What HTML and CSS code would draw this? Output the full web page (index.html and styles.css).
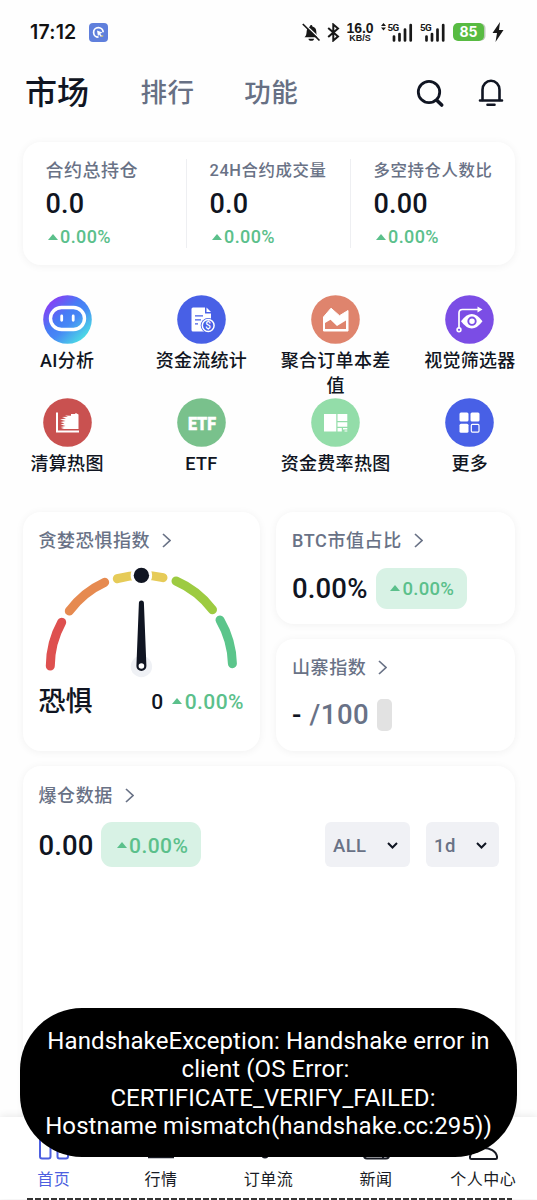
FILE: index.html
```html
<!DOCTYPE html>
<html lang="zh-CN">
<head>
<meta charset="utf-8">
<title>市场</title>
<link rel="stylesheet" href="styles.css">
</head>
<body>
<div class="app">
  <div class="status">
    <span class="clock">17:12</span>
    <svg class="app-badge" width="19" height="19" viewBox="0 0 19 19"><rect width="19" height="19" rx="4" fill="#5f7fdc"/><path d="M9.500 14.200A4.800 4.800 0 1 1 14.200 9.200" fill="none" stroke="#fff" stroke-width="1.700"/><path d="M8 7.500l5.500 2-2.300 1.200 1.800 2.300-1 .9-2-2.300-1 2z" fill="#fff"/><path d="M11.500 13.800l2.700-2v2z" fill="#d8c46a"/></svg>
    <div class="status-right">
      <svg width="19" height="19" viewBox="0 0 19 19"><path d="M2.500 14.300c2-2 1.900-3.300 2.200-6.300.3-2.800 1.700-4 3.300-4.500 0-2 2.400-2 2.400 0C13 4.300 14.300 6 14.300 8.500c0 3 .6 4 2 5.800z" fill="#181818"/><path d="M6.500 15.700h5.500a2.700 2 0 0 1-5.500 0z" fill="#181818"/><path d="M2.500 1l15.500 14.700" stroke="#fff" stroke-width="1.500"/><path d="M.8 1l16.700 16.500" stroke="#181818" stroke-width="1.700"/></svg>
      <svg class="bt" width="13" height="19" viewBox="0 0 13 19"><path d="M1.200 5l9.800 8.500-4.700 4V1.500l4.700 4L1.200 14" fill="none" stroke="#181818" stroke-width="2"/></svg>
      <div class="speed"><b>16.0</b><span>KB/S</span></div>
      <svg class="sig1" width="32" height="20" viewBox="0 0 32 20"><path d="M0 4l2.500-3L5 4zM0 5.500h5l-2.500 3z" fill="#181818"/><path d="M13 14.500v4M18.500 12v6.500M24 7.500v11M29.700 3v15.500" stroke="#181818" stroke-width="2.700" stroke-linecap="round"/><text x="6.500" y="8.700" class="g5">5G</text></svg>
      <svg class="sig2" width="26" height="20" viewBox="0 0 26 20"><path d="M6.500 14.500v4M12 12v6.500M17.500 7.500v11M23.200 3v15.500" stroke="#181818" stroke-width="2.700" stroke-linecap="round"/><text x="0" y="8.700" class="g5">5G</text></svg>
      <span class="battery">85</span>
      <svg class="bolt" width="12" height="20" viewBox="0 0 12 20"><path d="M8 0L.5 11H5L3.500 20 11.500 8H7z" fill="#181818"/></svg>
    </div>
  </div>

  <header class="tabs">
    <span class="tab active">市场</span><span class="tab">排行</span><span class="tab">功能</span>
    <div class="actions">
      <svg width="30" height="30" viewBox="0 0 30 30" fill="none" stroke="#101522" stroke-linecap="round"><circle cx="14" cy="14" r="10.700" stroke-width="2.800"/><path d="M22 22.500l4.700 4.500" stroke-width="3.600"/></svg>
      <svg width="28" height="28" viewBox="0 0 28 28" fill="none" stroke="#101522" stroke-width="2.600" stroke-linecap="round"><path d="M5.500 21V10.800a8.500 9 0 0 1 17 0V21"/><path d="M3 21.500h22M10.500 25.800h7"/></svg>
    </div>
  </header>

  <section class="card stats">
    <div class="stat first"><label>合约总持仓</label><strong>0.0</strong><span class="up"><i></i>0.00%</span></div>
    <div class="stat"><label>24H合约成交量</label><strong>0.0</strong><span class="up"><i></i>0.00%</span></div>
    <div class="stat"><label>多空持仓人数比</label><strong>0.00</strong><span class="up"><i></i>0.00%</span></div>
  </section>

  <section class="tools">
    <div class="tool"><svg viewBox="0 0 49 49"><defs><linearGradient id="ai" x1=".1" y1=".1" x2=".85" y2=".9"><stop offset="0" stop-color="#9038f5"/><stop offset=".4" stop-color="#477bf5"/><stop offset=".6" stop-color="#4788f5"/><stop offset="1" stop-color="#4ce0e4"/></linearGradient></defs><circle cx="24.500" cy="24.500" r="24.300" fill="url(#ai)"/><rect x="7.500" y="12.500" width="34" height="22" rx="11" fill="none" stroke="#fff" stroke-width="3.400"/><path d="M18.700 21v4.300M30.200 21v4.300" stroke="#fff" stroke-width="2.800" stroke-linecap="round"/></svg><span>AI分析</span></div>
    <div class="tool"><svg viewBox="0 0 49 49"><circle cx="24.500" cy="24.500" r="24.300" fill="#4860e6"/><path d="M16 12.500h12v6h6v18H16a1.500 1.500 0 0 1-1.500-1.500V14a1.500 1.500 0 0 1 1.500-1.500z" fill="#fff"/><path d="M29.500 12.500l4.500 4.500h-4.500z" fill="#fff"/><path d="M18 20.800h8M18 24.800h6M18 28.800h3" stroke="#4860e6" stroke-width="1.300"/><circle cx="31.200" cy="30.500" r="7.500" fill="#4860e6"/><circle cx="31.200" cy="30.500" r="5.900" fill="#4860e6" stroke="#fff" stroke-width="1.500"/><text x="31.200" y="34" class="dollar">$</text></svg><span>资金流统计</span></div>
    <div class="tool"><svg viewBox="0 0 49 49"><circle cx="24.500" cy="24.500" r="24.300" fill="#df846d"/><path d="M12.500 22l7.500-8.800 8.500 7.500 8.500-5.200v20.500H12.500z" fill="#fff" stroke="#fff" stroke-width="1" stroke-linejoin="round"/><path d="M14 28l5.500-3.300 6.500 6.300 9-5.500v8.500H14z" fill="#df846d"/></svg><span>聚合订单本差值</span></div>
    <div class="tool"><svg viewBox="0 0 49 49"><circle cx="24.500" cy="24.500" r="24.300" fill="#7b4de5"/><path d="M14 33V18q0-3.500 3.500-3.500H34" fill="none" stroke="#fff" stroke-width="1.700"/><path d="M32.500 11.500l5 3-5 3z" fill="#fff"/><circle cx="14" cy="34.800" r="1.900" fill="none" stroke="#fff" stroke-width="1.600"/><path d="M16 26.200q10.700-14.500 21.500 0-10.700 14.500-21.500 0z" fill="#fff"/><circle cx="27" cy="26.200" r="3.700" fill="none" stroke="#7b4de5" stroke-width="1.900"/></svg><span>视觉筛选器</span></div>
    <div class="tool"><svg viewBox="0 0 49 49"><circle cx="24.500" cy="24.500" r="24.300" fill="#c95150"/><path d="M14 14.500V33.500H36" fill="none" stroke="#fff" stroke-width="2"/><path d="M35.500 16.500v14.500H18l3-1-3.500-1 5-1-5-1.500 4-1-4-1.500 5-1-5.500-1.500 6-1-4-1.500 6-.3-3-1.200 6 .2v-1.700h4l.8-1z" fill="#fff"/></svg><span>清算热图</span></div>
    <div class="tool"><svg viewBox="0 0 49 49"><circle cx="24.500" cy="24.500" r="24.300" fill="#79c18c"/><text x="11" y="31.700" class="etf" textLength="28" lengthAdjust="spacingAndGlyphs">ETF</text></svg><span>ETF</span></div>
    <div class="tool"><svg viewBox="0 0 49 49"><circle cx="24.500" cy="24.500" r="24.300" fill="#93dda9"/><path d="M13 16h12.300v17.500H13zM26.500 16h9.800v7h-9.800zM26.500 24.200h9.800v4.500h-9.800zM26.500 29.900h4.300v3.600h-4.300zM32 29.900h4.300v1.700H32zM33.500 32.500h2.800v1h-2.800z" fill="#fff"/></svg><span>资金费率热图</span></div>
    <div class="tool"><svg viewBox="0 0 49 49"><circle cx="24.500" cy="24.500" r="24.300" fill="#4860e6"/><g fill="#fff"><rect x="14.500" y="14.500" width="9" height="9" rx="1.500"/><rect x="25.500" y="14.500" width="9" height="9" rx="1.500"/><rect x="14.500" y="25.700" width="9" height="9" rx="1.500"/></g><rect x="26.300" y="26.400" width="7.700" height="7.700" rx="1" fill="none" stroke="#fff" stroke-width="1.200"/></svg><span>更多</span></div>
  </section>

  <section class="indices">
    <div class="card fear">
      <h2>贪婪恐惧指数<svg class="chev" viewBox="0 0 9 15"><path d="M1 1l7 6.500L1 14"/></svg></h2>
      <svg class="gauge" width="207" height="122" viewBox="0 0 207 122">
        <g fill="none" stroke-width="9" stroke-linecap="round">
          <path d="M12.300 108A91.500 91.500 0 0 1 23.700 64.300" stroke="#de504f"/>
          <path d="M31.300 53A91.500 91.500 0 0 1 66.700 24.300" stroke="#e68a50"/>
          <path d="M79.300 20.700A91.500 91.500 0 0 1 125 19.700" stroke="#e6cb58"/>
          <path d="M138 23A91.500 91.500 0 0 1 174.500 51.700" stroke="#9dcb41"/>
          <path d="M182 62A91.500 91.500 0 0 1 194.400 105.700" stroke="#5bc58b"/>
        </g>
        <circle cx="103.400" cy="17.400" r="10.700" fill="#fff"/><circle cx="103.400" cy="17.400" r="7.700" fill="#101522"/>
        <circle cx="103.400" cy="108.500" r="10.700" fill="#eff1f5"/>
        <path d="M100.900 45a2.500 2.500 0 0 1 5 0l2.500 63a5 5 0 0 1-10 0z" fill="#101522"/><circle cx="103.400" cy="108" r="2.800" fill="#fff"/>
      </svg>
      <div class="fear-row"><strong>恐惧</strong><b>0</b><span class="up large"><i></i>0.00%</span></div>
    </div>
    <div class="side">
      <div class="card btc">
        <h2>BTC市值占比<svg class="chev" viewBox="0 0 9 15"><path d="M1 1l7 6.500L1 14"/></svg></h2>
        <div class="value-row"><strong>0.00%</strong><span class="pill up"><i></i>0.00%</span></div>
      </div>
      <div class="card alt">
        <h2>山寨指数<svg class="chev" viewBox="0 0 9 15"><path d="M1 1l7 6.500L1 14"/></svg></h2>
        <div class="value-row"><strong>-</strong><span class="total">/100</span><span class="blank"></span></div>
      </div>
    </div>
  </section>

  <section class="card liquidation">
    <h2>爆仓数据<svg class="chev" viewBox="0 0 9 15"><path d="M1 1l7 6.500L1 14"/></svg></h2>
    <div class="value-row"><strong>0.00</strong><span class="pill up large"><i></i>0.00%</span>
      <span class="select all">ALL<svg width="11" height="7" viewBox="0 0 11 7"><path d="M1 1l4.500 4.500L10 1"/></svg></span>
      <span class="select day">1d<svg width="11" height="7" viewBox="0 0 11 7"><path d="M1 1l4.500 4.500L10 1"/></svg></span>
    </div>
  </section>

  <nav class="nav">
    <div class="nav-item active"><svg viewBox="0 0 32 32" fill="none" stroke="#4d5fe0" stroke-width="2"><rect x="2" y="4" width="10.500" height="25.500" rx="2"/><rect x="19.500" y="10" width="10.500" height="19.500" rx="2"/></svg><span>首页</span></div>
    <div class="nav-item"><svg viewBox="0 0 32 32"><path d="M3 28h26" stroke="#181b24" stroke-width="2.500"/></svg><span>行情</span></div>
    <div class="nav-item"><svg viewBox="0 0 32 32"><circle cx="13" cy="26" r="3.500" fill="#181b24"/></svg><span>订单流</span></div>
    <div class="nav-item"><svg viewBox="0 0 32 32" fill="none" stroke="#181b24" stroke-width="2"><rect x="4" y="5" width="25" height="24.500" rx="3"/><path d="M23 10v19M8 26h10"/></svg><span>新闻</span></div>
    <div class="nav-item"><svg viewBox="0 0 32 32" fill="none" stroke="#181b24" stroke-width="2"><circle cx="16" cy="8" r="6"/><path d="M3 28.500v-1C5 16 28 16 30 27.500v1q0 1.500-1.500 1.500h-24Q3 30 3 28.500z"/></svg><span>个人中心</span></div>
  </nav>
  <div class="edge"></div>

  <div class="toast"><p>HandshakeException: Handshake error in</p><p class="l2">client (OS Error:</p><p class="l3">CERTIFICATE_VERIFY_FAILED:</p><p>Hostname mismatch(handshake.cc:295))</p></div>
</div>
</body>
</html>
```

FILE: styles.css
```css
* { box-sizing: border-box; }
body { margin: 0; background: #fefefe; }
.app { position: relative; width: 537px; height: 1200px; overflow: hidden; display: flex; flex-direction: column; font-family: Roboto, "Noto Sans CJK SC", sans-serif; font-weight: 500; color: #101522; }
svg { display: block; flex: none; }
h2, p { margin: 0; }
strong, b { font-weight: 500; }

.status { flex: none; height: 64px; padding-left: 30px; display: flex; align-items: center; }
.clock { font: 600 19.500px/24px Inter, sans-serif; letter-spacing: .2px; width: 59px; color: #111; white-space: nowrap; }
.status-right { display: flex; align-items: center; margin-left: 194px; }
.bt { margin-left: 6px; }
.speed { width: 30px; margin-left: 5px; display: flex; flex-direction: column; align-items: center; font-family: "Liberation Sans", sans-serif; color: #181818; }
.speed b { font-size: 14px; line-height: 12px; font-weight: 700; white-space: nowrap; }
.speed span { font-size: 9px; line-height: 9px; font-weight: 700; }
.sig1 { margin-left: 6px; }
.sig2 { margin-left: 7px; }
.sig1, .sig2 { overflow: visible; }
.g5 { font: 700 9.800px Roboto, sans-serif; letter-spacing: -.5px; fill: #181818; }
.battery { margin-left: 7px; width: 31px; height: 18px; border-radius: 5px; background: #58bb42; box-shadow: 2px 0 0 -.5px #bdc9b9; color: #fff; font: 700 14px/18px Inter, sans-serif; text-align: center; }
.bolt { margin-left: 8px; }

.tabs { flex: none; height: 58px; padding: 0 32px 0 25px; display: flex; align-items: center; }
.tab { font-size: 26.500px; line-height: 38px; letter-spacing: .4px; color: #677084; margin: 0 50px 0 0; }
.tab.active { font-size: 32px; letter-spacing: 0; color: #101522; margin: -1px 51.500px 0 0; }
.actions { margin-left: auto; display: flex; align-items: center; gap: 32px; }

.card { background: #fff; border-radius: 18px; box-shadow: 0 1px 9px rgba(0,0,0,.055); }
.stats { flex: none; height: 123px; margin: 20px 22px 0 22.500px; padding: 17px 0; display: flex; }
.stat { width: 164px; padding-left: 23px; display: flex; flex-direction: column; height: 89px; border-right: 1px solid #eeeff2; }
.stat:last-child { border-right: 0; }
.stat label { font-size: 16.400px; letter-spacing: .6px; line-height: 24px; color: #697286; white-space: nowrap; }
.stat.first label { font-size: 18px; letter-spacing: .5px; }
.stat strong { font-size: 27px; line-height: 43px; letter-spacing: .2px; }
.up { display: flex; align-items: center; color: #5bc08b; font-size: 18px; line-height: 22px; letter-spacing: .4px; }
.up i { border: 5.500px solid transparent; border-top: 0; border-bottom: 6px solid #5bc08b; margin: 0 2.500px 1px 2px; }
.up.large { font-size: 21px; letter-spacing: .45px; }

.tools { flex: none; margin-top: 30px; display: grid; grid-template-columns: repeat(4, 1fr); grid-template-rows: 103px 103px; }
.tool { display: flex; flex-direction: column; align-items: center; }
.tool svg { width: 49px; height: 49px; }
.tool span { width: 114px; margin-top: 4px; font-size: 18px; line-height: 25px; letter-spacing: .3px; text-align: center; }
.dollar { font: 500 10px Roboto, sans-serif; fill: #fff; text-anchor: middle; }
.etf { font: 900 19px Roboto, sans-serif; fill: #fff; stroke: #fff; stroke-width: .5; }

.indices { flex: none; margin: 11px 22px 0 22.500px; height: 239px; display: flex; gap: 16px; }
.fear { width: 237.500px; padding: 16px; }
.side { flex: 1; display: flex; flex-direction: column; justify-content: space-between; }
.btc, .alt { height: 112px; padding: 16px; }
h2 { height: 25px; display: flex; align-items: center; font-size: 18px; line-height: 25px; letter-spacing: .6px; font-weight: 500; color: #697286; white-space: nowrap; }
.chev { width: 9px; height: 15px; margin-left: 12px; fill: none; stroke: #697286; stroke-width: 1.700; }
.gauge { margin-top: 5px; margin-left: -.5px; }
.fear-row { margin-top: 0; height: 42px; display: flex; align-items: center; }
.fear-row strong { font-size: 27px; line-height: 38px; margin-top: 2px; width: 113px; }
.fear-row b { font-size: 21px; margin: 1px 7px 0 0; }
.fear-row .up { margin-top: 1px; }
.value-row { display: flex; align-items: center; }
.value-row strong { font-size: 27.500px; line-height: 40px; letter-spacing: .2px; }
.btc .value-row { margin-top: 15px; height: 41px; }
.btc .value-row strong { letter-spacing: .15px; }
.pill { margin-left: 8px; background: #d8f2e5; border-radius: 11px; width: 91px; height: 41px; justify-content: center; font-size: 18.500px; letter-spacing: .3px; }
.alt .value-row { margin-top: 14px; height: 41px; }
.total { font-size: 27.500px; letter-spacing: .5px; color: #697286; margin-left: 8px; }
.blank { width: 15px; height: 32px; border-radius: 5px; background: #e2e2e2; margin-left: 8px; }

.liquidation { flex: none; height: 380px; margin: 15px 22px 0 22.500px; padding: 17px 16px 16px; }
.liquidation .value-row { margin-top: 14px; height: 45px; }
.liquidation .value-row strong { padding-top: 2px; letter-spacing: .1px; }
.liquidation .pill { width: 100px; height: 45px; padding-top: 2px; }
.select { display: flex; align-items: center; justify-content: space-between; height: 45px; border-radius: 6px; background: #f0f1f5; color: #697286; font-size: 18.500px; letter-spacing: .4px; padding: 2px 12.500px 0 8px; }
.select svg { fill: none; stroke: #101522; stroke-width: 2; }
.select.all { width: 85px; margin-left: auto; margin-right: 16px; }
.select.day { width: 73px; }

.nav { flex: none; height: 82px; margin-top: -29px; background: #fff; box-shadow: 0 -1px 8px rgba(0,0,0,.09); position: relative; display: grid; grid-template-columns: repeat(5, 1fr); padding-top: 12px; }
.nav-item { display: flex; flex-direction: column; align-items: center; font-weight: 400; font-size: 16px; line-height: 24px; letter-spacing: .5px; color: #181b24; white-space: nowrap; }
.nav-item svg { width: 32px; height: 32px; margin-bottom: 7px; }
.nav-item.active { color: #4d5fe0; }
.edge { flex: none; position: relative; height: 2px; margin: -1px 25px 0 27px; background: repeating-linear-gradient(90deg, #333 0 6px, #fff 6px 8px); }

.toast { position: absolute; left: 20px; top: 1008px; width: 497px; height: 149px; border-radius: 62px; background: #000; color: #fff; padding-top: 19px; text-align: center; font-size: 24px; letter-spacing: .1px; line-height: 28.300px; font-weight: 400; white-space: nowrap; }
.toast .l2 { padding-right: 6px; }
.toast .l3 { padding-left: 9px; }
```
